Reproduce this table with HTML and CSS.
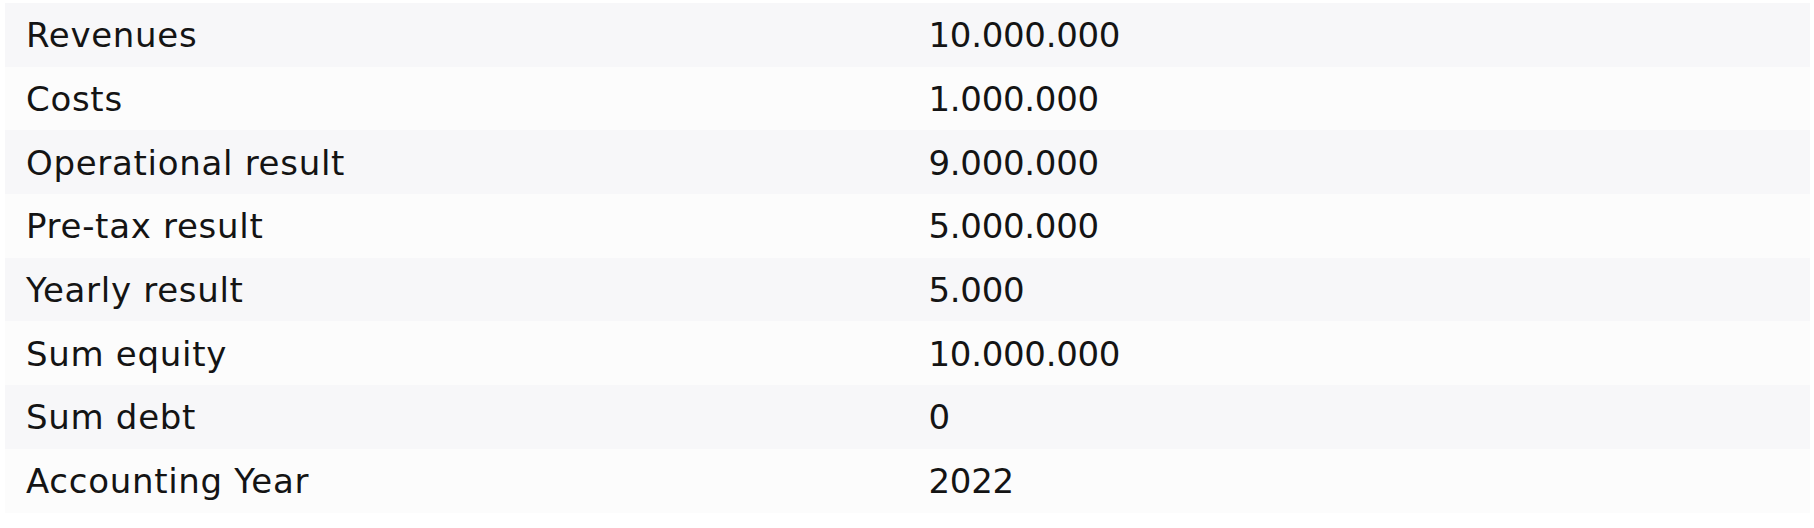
FILE: index.html
```html
<!DOCTYPE html>
<html>
<head>
<meta charset="utf-8">
<link rel="stylesheet" href="styles.css">
</head>
<body>
<div class="wrap">
<table class="facts">
<tbody>
<tr><td class="label">Revenues</td><td class="value">10.000.000</td></tr>
<tr><td class="label">Costs</td><td class="value">1.000.000</td></tr>
<tr><td class="label">Operational result</td><td class="value">9.000.000</td></tr>
<tr><td class="label">Pre-tax result</td><td class="value">5.000.000</td></tr>
<tr><td class="label">Yearly result</td><td class="value">5.000</td></tr>
<tr><td class="label">Sum equity</td><td class="value">10.000.000</td></tr>
<tr><td class="label">Sum debt</td><td class="value">0</td></tr>
<tr><td class="label">Accounting Year</td><td class="value">2022</td></tr>
</tbody>
</table>
</div>
</body>
</html>
```
FILE: styles.css
```css
html, body {
  margin: 0;
  padding: 0;
  background: #ffffff;
}
.wrap {
  padding: 3px 4px 0 5px;
}
.facts {
  width: 100%;
  border-collapse: collapse;
  table-layout: fixed;
  font-family: "DejaVu Sans", sans-serif;
  font-size: 34px;
  color: #141414;
}
.facts td {
  height: 63.7px;
  padding: 1px 0 0 21px;
  vertical-align: middle;
  white-space: nowrap;
  box-sizing: border-box;
}
.facts .label {
  letter-spacing: 0.7px;
}
.facts .value {
  letter-spacing: -0.3px;
}
.facts tr:nth-child(odd) {
  background: #f7f7f9;
}
.facts tr:nth-child(even) {
  background: #fcfcfc;
}
```
